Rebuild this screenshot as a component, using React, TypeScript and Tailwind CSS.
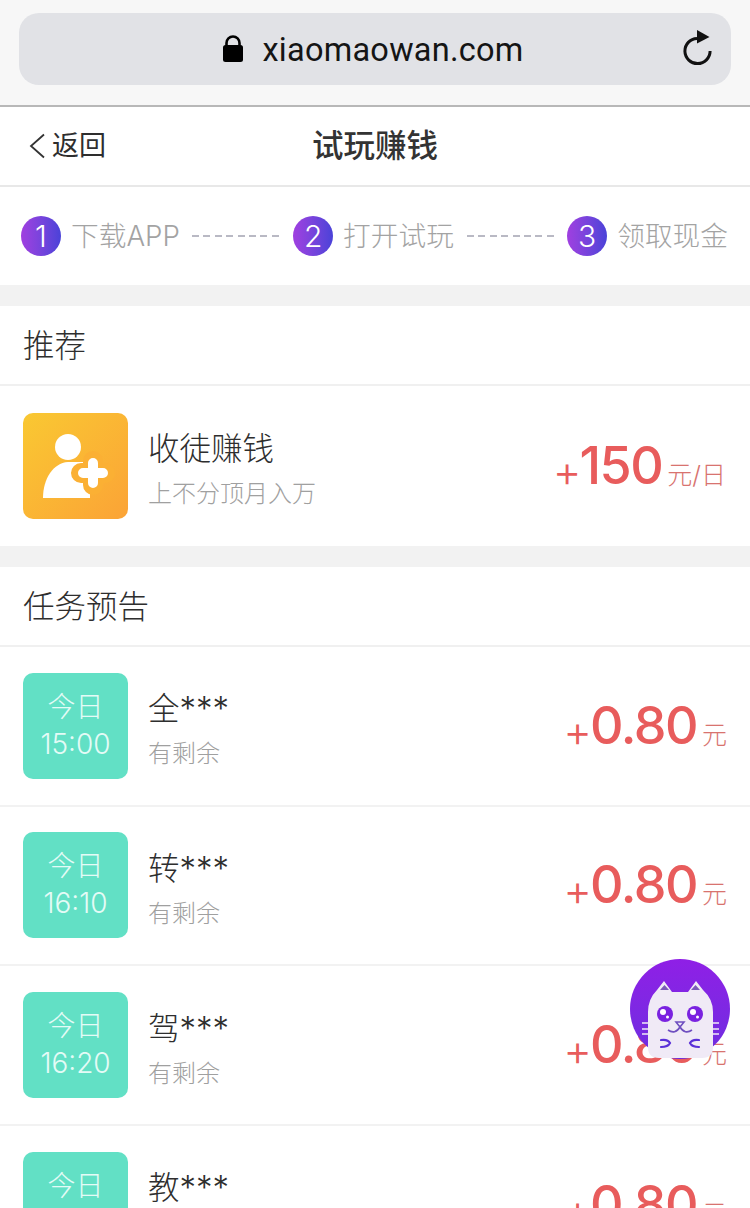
const FONT = "font-['Inter','Noto_Sans_CJK_SC',sans-serif]";

const steps = [
	{ n: "1", label: "下载APP" },
	{ n: "2", label: "打开试玩" },
	{ n: "3", label: "领取现金" },
];

const tasks = [
	{ time: "15:00", name: "全" },
	{ time: "16:10", name: "转" },
	{ time: "16:20", name: "驾" },
	{ time: "16:30", name: "教" },
];

function AddressBar() {
	return (
		<div className="h-[105px] shrink-0 bg-[#f7f7f7] px-[19px] pt-[13px]">
			<div className="relative flex h-[72px] items-center justify-center rounded-[20px] bg-[#e1e2e6] pr-[4px]">
				<svg width="22" height="28" viewBox="0 0 22 28" className="mr-[18px]" aria-hidden="true">
					<path d="M4.5 12V8a6.5 6.5 0 0 1 13 0v4" fill="none" stroke="#000" strokeWidth="2.6" />
					<rect x="1" y="10" width="20" height="17" rx="2.5" fill="#000" />
				</svg>
				<span className="pt-[2px] text-[32.5px] leading-none tracking-[0.25px] text-[#151515] font-['Roboto',sans-serif]">xiaomaowan.com</span>
				<svg width="32" height="36" viewBox="0 0 32 36" className="absolute right-[17px] top-[17px]" aria-hidden="true">
					<path d="M15 8.4A12.6 12.6 0 1 0 28.1 21" fill="none" stroke="#111" strokeWidth="3" />
					<path d="M15 0l12.5 7L15 13.5z" fill="#111" />
				</svg>
			</div>
		</div>
	);
}

function StepsBar() {
	return (
		<div className="flex h-[98px] shrink-0 items-center justify-between bg-white pl-[21px] pr-[22px]">
			{steps.map((s, i) => (
				<div key={s.n} className="contents">
					<div className="flex items-center gap-[10px]">
						<span className="flex h-[40px] w-[40px] items-center justify-center rounded-full bg-gradient-to-r from-[#a03fe0] to-[#4a42d8] text-[30px] leading-none font-light text-white">
							{s.n}
						</span>
						<span className="pt-[2px] text-[27.7px] leading-none font-light text-[#a3a3a3]">{s.label}</span>
					</div>
					{i < 2 && <span className="ml-[3px] h-[2px] w-[91px] bg-[repeating-linear-gradient(90deg,#b9b9c4_0_7px,transparent_7px_11.4px)]" />}
				</div>
			))}
		</div>
	);
}

function SectionTitle({ children }: { children: string }) {
	return (
		<div className="flex h-[80px] items-center border-b-2 border-[#f0f0f0] bg-white pl-[23px] pt-[2px] text-[31.5px] font-light text-[#2e2e2e]">
			{children}
		</div>
	);
}

function Price({ value, unit }: { value: string; unit: string }) {
	return (
		<div className="flex items-baseline text-[#e85c5c]">
			<span className="-mr-[2px] translate-y-[3px] text-[44px] leading-none font-light">+</span>
			<span className="text-[52px] leading-none font-medium tracking-[-1.5px]">{value}</span>
			<span className="ml-[5px] text-[25px] leading-none font-light text-[#d8736f]">{unit}</span>
		</div>
	);
}

function CatBadge() {
	return (
		<div className="absolute left-[630px] top-[959px] h-[100px] w-[100px] rounded-full bg-gradient-to-b from-[#8f1fe6] to-[#6d2de0]">
			<svg width="100" height="100" viewBox="0 0 100 100" aria-hidden="true">
				<path d="M18 53Q18 40 27 31L34 22L42 33H58L66 22L73 31Q83 40 83 53V88Q83 99 72 99H29Q18 99 18 88Z" fill="#f0eaf6" />
				<path d="M30 31l4.5-5 4.5 5zM61 31l4.5-5 4.5 5z" fill="#7c5ab8" />
				<circle cx="35" cy="55" r="8" fill="#7a22e0" />
				<circle cx="65" cy="55" r="8" fill="#7a22e0" />
				<circle cx="33" cy="53" r="3" fill="#fff" />
				<circle cx="63" cy="53" r="3" fill="#fff" />
				<circle cx="37.5" cy="58" r="1.5" fill="#fff" />
				<circle cx="67.5" cy="58" r="1.5" fill="#fff" />
				<path d="M46 63h8l-4 5zM38 71q7 5 12-3 5 8 12 3" fill="none" stroke="#6f4fc0" strokeWidth="1.6" />
				<path d="M31 81q7-1 9 3-2 4-9 4M69 81q-7-1-9 3 2 4 9 4" fill="none" stroke="#5a30d8" strokeWidth="2.2" strokeLinecap="round" />
				<path d="M12 64h6M12 70h6M12 75h6M83 64h6M83 70h6M83 75h6" stroke="#f0eaf6" strokeWidth="1.6" />
			</svg>
		</div>
	);
}

export default function App() {
	return (
		<div className={`relative flex h-[1208px] w-[750px] flex-col overflow-hidden bg-[#f2f2f2] ${FONT}`}>
			<AddressBar />
			<header className="relative flex h-[82px] shrink-0 items-center justify-center border-y-2 border-t-[#b8b8b8] border-b-[#e8e8e8] bg-white">
				<div className="absolute left-[29px] flex items-center text-[#333]">
					<svg width="17" height="26" viewBox="0 0 17 26" aria-hidden="true">
						<path d="M15 1.5L2 13l13 11.5" fill="none" stroke="#333" strokeWidth="1.8" />
					</svg>
					<span className="ml-[6px] text-[27px] text-[#2e2e2e]">返回</span>
				</div>
				<h1 className="text-[31.5px] font-medium text-[#333]">试玩赚钱</h1>
			</header>
			<StepsBar />
			<section className="mt-[21px] shrink-0 bg-white">
				<SectionTitle>推荐</SectionTitle>
				<div className="flex h-[160px] items-center pl-[23px] pr-[24px]">
					<div className="h-[106px] w-[105px] rounded-[10px] bg-gradient-to-br from-[#f9c832] to-[#fba336]">
						<svg width="105" height="106" viewBox="0 0 105 106" aria-hidden="true">
							<circle cx="45" cy="34" r="13" fill="#fff" />
							<path d="M20 85C20 66 30 50 45 49H67V85Z" fill="#fff" />
							<path d="M70 48v24M58 60h24" stroke="#fbb034" strokeWidth="20" strokeLinecap="round" />
							<path d="M70 50v20M60 60h20" stroke="#fff" strokeWidth="10" strokeLinecap="round" />
						</svg>
					</div>
					<div className="ml-[20px] flex-1 pt-[7px]">
						<div className="text-[31.5px] leading-[40px] font-light text-[#2e2e2e]">收徒赚钱</div>
						<div className="mt-[9px] text-[24px] leading-[32px] font-light text-[#a0a0a0]">上不分顶月入万</div>
					</div>
					<Price value="150" unit="元/日" />
				</div>
			</section>
			<section className="mt-[21px] shrink-0 bg-white">
				<SectionTitle>任务预告</SectionTitle>
				{tasks.map((t) => (
					<div key={t.time} className="flex h-[159.67px] items-center border-b-2 border-[#f2f2f2] pl-[23px] pr-[23px]">
						<div className="flex h-[106px] w-[105px] flex-col items-center justify-center rounded-[10px] bg-[#62e0c5] font-light text-[#e4fbf6]">
							<span className="text-[28px] leading-[36px]">今日</span>
							<span className="text-[28px] leading-[38px]">{t.time}</span>
						</div>
						<div className="ml-[20px] flex-1 pt-[7px]">
							<div className="text-[31.5px] leading-[40px] font-light text-[#2e2e2e]">
								{t.name}
								<span className="text-[33px]">***</span>
							</div>
							<div className="mt-[9px] text-[24px] leading-[32px] font-light text-[#a0a0a0]">有剩余</div>
						</div>
						<Price value="0.80" unit="元" />
					</div>
				))}
			</section>
			<CatBadge />
		</div>
	);
}
